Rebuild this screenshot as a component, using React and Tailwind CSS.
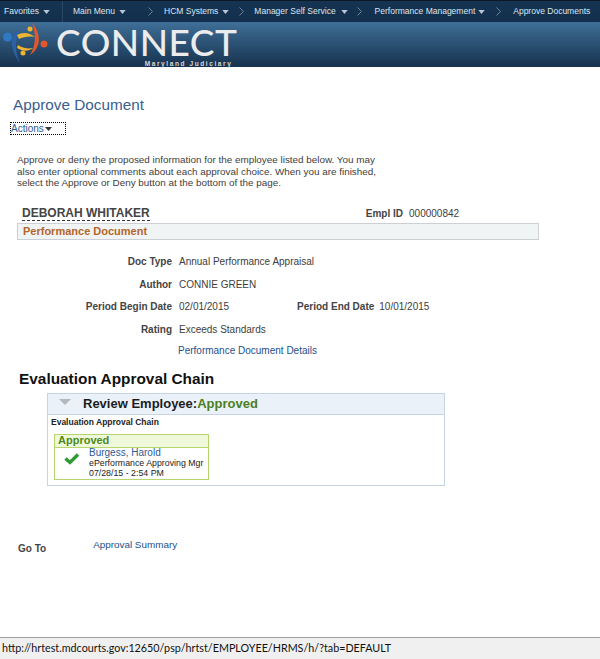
const arial = "font-['Liberation_Sans',Arial,sans-serif]"

function Caret({ className = '' }) {
  return (
    <svg width="7" height="4" viewBox="0 0 8 5" className={`shrink-0 ${className}`}>
      <path d="M0 0h8L4 5z" fill="#b9c6d3" />
    </svg>
  )
}

function Chevron({ className = '' }) {
  return (
    <svg width="5" height="9" viewBox="0 0 5 9" className={`shrink-0 ${className}`}>
      <path d="M0.5 0.5L4.5 4.5L0.5 8.5" fill="none" stroke="#6f8397" strokeWidth="1" />
    </svg>
  )
}

function Logo() {
  return (
    <svg width="48" height="45" viewBox="3 22 48 45" className="shrink-0">
      <circle cx="7.5" cy="37" r="4.5" fill="#2f78c4" />
      <path d="M14 33C18 31 20 32 20 33C15 38 14 50 20 63C13 54 9 42 14 33z" fill="#2a62a5" />
      <path d="M32 23C41 32 42 48 30 55C35 47 37 36 32 23z" fill="#e2562b" />
      <circle cx="44" cy="44" r="3.5" fill="#e2562b" />
      <path d="M17 35C22 32 29 32 35 37C29 36 23 37 19 39z" fill="#f0b52e" />
      <circle cx="30" cy="29" r="2.5" fill="#f0b52e" />
      <path d="M18 45C22 48 28 49 33 48C28 52 22 51 17 48z" fill="#f0b52e" />
      <circle cx="23" cy="53" r="2.5" fill="#f0b52e" />
    </svg>
  )
}

function Field({ label, value, children }) {
  return (
    <div className="flex h-[22.7px] items-center text-[10px]">
      <span className="w-[172px] text-right font-bold text-[#444]">{label}</span>
      <span className="ml-[7px] text-[#3d3d3d]">{value}</span>
      {children}
    </div>
  )
}

export default function App() {
  return (
    <div className={`flex min-h-[659px] w-[600px] flex-col overflow-hidden bg-white ${arial}`}>
      <nav className="flex h-[22px] items-center border-t border-[#0c1824] bg-gradient-to-b from-[#163352] to-[#12304d] text-[8.5px] whitespace-nowrap text-[#dfe6ec]">
        <span className="ml-[4px]">Favorites</span>
        <Caret className="ml-[4px]" />
        <span className="ml-[12px] h-full w-px bg-[#2a4763]" />
        <span className="ml-[10px]">Main Menu</span>
        <Caret className="ml-[4px]" />
        <Chevron className="ml-[22px]" />
        <span className="ml-[11px]">HCM Systems</span>
        <Caret className="ml-[4px]" />
        <Chevron className="ml-[10px]" />
        <span className="ml-[10px]">Manager Self Service</span>
        <Caret className="ml-[5px]" />
        <Chevron className="ml-[9px]" />
        <span className="ml-[13px]">Performance Management</span>
        <Caret className="ml-[3px]" />
        <Chevron className="ml-[11px]" />
        <span className="ml-[12px]">Approve Documents</span>
      </nav>

      <header className="flex h-[45px] items-start bg-gradient-to-b from-[#3f6f98] to-[#17334f] pl-[3px]">
        <Logo />
        <div className="ml-[5px] h-full">
          <span className="mt-[3px] block font-['Lato',sans-serif] text-[37px] leading-[34px] font-medium tracking-[0.5px] text-[#ececec]">CONNECT</span>
          <span className="mt-[1px] block pr-[5px] text-right text-[6.5px] leading-[7px] font-bold tracking-[1.6px] whitespace-nowrap text-[#d8d8d8]">
            Maryland Judiciary
          </span>
        </div>
      </header>

      <main className="flex flex-1 flex-col">
        <h1 className="ml-[13px] mt-[28px] text-[15.3px] leading-[20px] text-[#39608f]">Approve Document</h1>
        <button className="ml-[10px] mt-[7px] flex h-[13px] w-[56px] items-center border border-dotted border-black text-[10px] text-[#2d5a94]">
          Actions
          <svg width="7" height="4" viewBox="0 0 7 4" className="ml-[1px]">
            <path d="M0 0h7L3.5 4z" fill="#333" />
          </svg>
        </button>

        <p className="ml-[17px] mt-[19px] w-[372px] text-[9.9px] leading-[11.7px] text-[#3d3d3d]">
          Approve or deny the proposed information for the employee listed below. You may also enter optional comments about each approval choice. When you are finished, select the Approve or Deny button at the bottom of the page.
        </p>

        <div className="mt-[17px] flex items-end">
          <span className="ml-[22px] border-b border-dashed border-[#333] text-[12px] leading-[14px] font-bold text-[#444]">DEBORAH WHITAKER</span>
          <span className="ml-[216px] text-[10px] font-bold text-[#444]">Empl ID</span>
          <span className="ml-[6px] text-[10px] text-[#3d3d3d]">000000842</span>
        </div>
        <div className="ml-[17px] mt-[2px] flex h-[17px] w-[522px] items-center border border-[#ccd0d4] bg-[#f1f4f5] pl-[5px] text-[11px] font-bold text-[#b4662a]">
          Performance Document
        </div>

        <div className="mt-[10px]">
          <Field label="Doc Type" value="Annual Performance Appraisal" />
          <Field label="Author" value="CONNIE GREEN" />
          <Field label="Period Begin Date" value="02/01/2015">
            <span className="ml-[68px] font-bold text-[#444]">Period End Date</span>
            <span className="ml-[5px] text-[#3d3d3d]">10/01/2015</span>
          </Field>
          <Field label="Rating" value="Exceeds Standards" />
        </div>
        <a className="ml-[178px] mt-[3px] text-[10px] leading-[13px] text-[#23508c]">Performance Document Details</a>

        <h2 className="ml-[19px] mt-[13px] text-[15.4px] leading-[18px] font-bold text-[#111]">Evaluation Approval Chain</h2>

        <section className="ml-[47px] mt-[5px] h-[93px] w-[398px] border border-[#c5d5e6]">
          <div className="flex h-[21px] items-center border-b border-[#c5d5e6] bg-[#eaf1f8] text-[13px] font-bold">
            <svg width="12" height="6" viewBox="0 0 12 6" className="ml-[11px] mb-[4px]">
              <path d="M0 0h12L6 6z" fill="#b3b8bd" />
            </svg>
            <span className="ml-[12px] text-[#1c1c1c]">Review Employee:</span>
            <span className="text-[#4c7f22]">Approved</span>
          </div>
          <p className="ml-[3px] mt-[1px] text-[8.5px] leading-[12px] font-bold text-[#222]">Evaluation Approval Chain</p>
          <div className="ml-[6px] mt-[6px] h-[46px] w-[155px] border border-[#b6d56f]">
            <div className="h-[13px] border-b border-[#b6d56f] bg-[#f0f8dc] pl-[3px] text-[11px] leading-[11px] font-bold text-[#4c8a1e]">Approved</div>
            <div className="flex">
              <svg width="16" height="12" viewBox="0 0 16 12" className="ml-[9px] mt-[5px] shrink-0">
                <path d="M1.5 5.5L6 9.5L14 1.5" fill="none" stroke="#2d9a34" strokeWidth="3.4" />
              </svg>
              <div className="ml-[9px] text-[8.8px] leading-[10px] text-[#222]">
                <div className="text-[10px] leading-[10px] text-[#2d5a94]">Burgess, Harold</div>
                <div>ePerformance Approving Mgr</div>
                <div>07/28/15 - 2:54 PM</div>
              </div>
            </div>
          </div>
        </section>

        <div className="mt-[52px] flex items-start">
          <span className="ml-[18px] mt-[3px] text-[10px] font-bold text-[#444]">Go To</span>
          <a className="ml-[47px] text-[9.9px] text-[#23508c]">Approval Summary</a>
        </div>
      </main>

      <footer className="flex h-[22px] items-center border-t border-[#a0a0a0] bg-[#f0f0f0] pl-[2px] font-['Lato',sans-serif] text-[10.75px] text-[#111]">
        http://hrtest.mdcourts.gov:12650/psp/hrtst/EMPLOYEE/HRMS/h/?tab=DEFAULT
      </footer>
    </div>
  )
}
